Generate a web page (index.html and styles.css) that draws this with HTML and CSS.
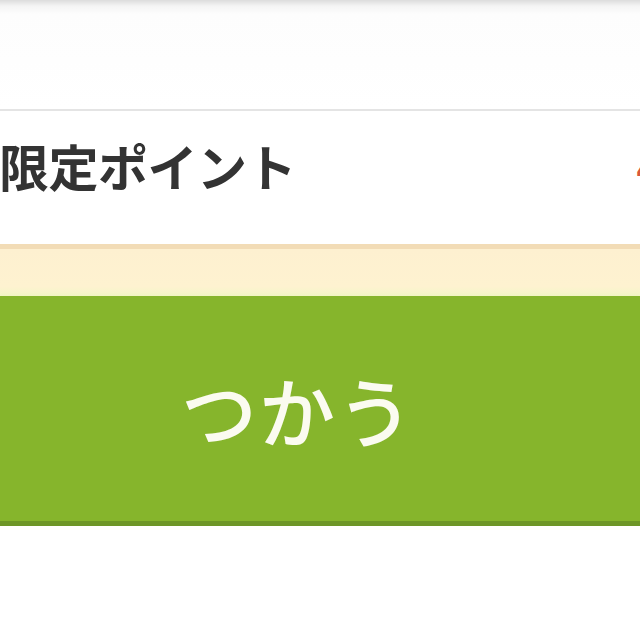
FILE: index.html
```html
<!DOCTYPE html>
<html lang="ja">
<head>
  <meta charset="UTF-8" />
  <meta name="viewport" content="width=device-width, initial-scale=1.0" />
  <title>ポイント</title>
  <link rel="stylesheet" href="styles.css">
</head>
<body>
  <div class="screen">
    <div class="top-bar"></div>

    <div class="point-row">
      <span class="point-label">限定ポイント</span>
      <span class="point-value">4</span>
    </div>

    <div class="notice"></div>

    <button type="button" class="use-btn">つかう</button>

    <div class="bottom-space"></div>
  </div>
</body>
</html>
```

FILE: styles.css
```css
html, body { margin: 0; padding: 0; background: #fff; overflow: hidden; }
body { font-family: "Noto Sans CJK JP", "Noto Sans", sans-serif; width: 640px; height: 640px; }

.screen { display: flex; flex-direction: column; width: 640px; }

.top-bar {
  height: 109px;
  background: linear-gradient(#dcdcdc 0px, #f4f4f4 6px, #fdfdfd 14px, #fff 100%);
}

.point-row {
  display: flex;
  align-items: center;
  justify-content: space-between;
  height: 133px;
  border-top: 2px solid #e4e4e4;
  background: #fff;
  overflow: hidden;
}
.point-label {
  font-size: 50px;
  font-weight: 700;
  color: #333;
  white-space: nowrap;
  margin-left: -1px;
  margin-top: -26px;
  letter-spacing: -0.5px;
}
.point-value {
  font-size: 40px;
  font-weight: 700;
  color: #d9573c;
  margin-right: -20px;
  margin-top: -22px;
}

.notice {
  height: 47px;
  border-top: 5px solid #f2dcb6;
  background: linear-gradient(#fdf0d0 0, #fef2d0 80%, #f3f7c6 100%);
}

.use-btn {
  display: block;
  width: 640px;
  height: 230px;
  border: none;
  border-bottom: 5px solid #6d9627;
  border-radius: 0;
  background: #86b52c;
  color: #fbfbf0;
  font-family: "Noto Sans CJK JP", sans-serif;
  font-size: 76px;
  font-weight: 500;
  letter-spacing: 2px;
  padding: 0 44px 0 0;
  margin: 0;
  box-shadow: 0 4px 6px rgba(120, 150, 60, 0.25);
  cursor: pointer;
}

.bottom-space { height: 120px; background: #fff; }
```
